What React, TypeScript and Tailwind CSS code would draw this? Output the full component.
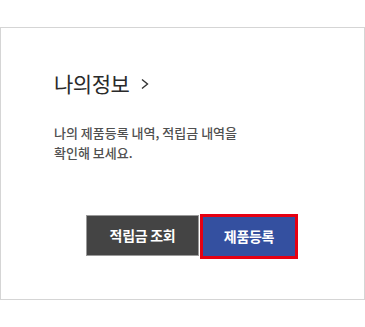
const font = { fontFamily: '"Noto Sans CJK KR", "Noto Sans", sans-serif' };

export default function App() {
  return (
    <div className="h-[327px] w-[365px] bg-white pt-[27px]" style={font}>
      <div className="h-[273px] w-[365px] border border-[#d5d5d5] bg-white">
        <div className="pl-[53px] pt-[41px]">
          <h2 className="flex items-center text-[21px] leading-[29px] font-normal tracking-[-0.5px] text-[#2a2a2a]">
            나의정보
            <svg viewBox="0 0 10 12" className="ml-[11px] h-[12px] w-[10px]" fill="none" stroke="#333" strokeWidth="1.4" aria-hidden="true">
              <path d="M2 1.5 7.5 6 2 10.5" />
            </svg>
          </h2>
          <p className="mt-[25px] text-[13px] leading-[20px] font-medium text-[#505050]">
            나의 제품등록 내역, 적립금 내역을
            <br />
            확인해 보세요.
          </p>
        </div>
        <div className="mt-[51px] flex items-start pl-[85px]">
          <button type="button"
            className="mt-[1px] h-[41px] w-[113px] border border-[#9a9a9a] bg-[#444444] text-[14px] font-bold tracking-[-0.3px] text-white">
            적립금 조회
          </button>
          <button type="button"
            className="ml-[1px] h-[45px] w-[98px] border-[3px] border-[#e60012] bg-[#3450a0] text-[14px] font-bold tracking-[-0.3px] text-white">
            제품등록
          </button>
        </div>
      </div>
    </div>
  );
}
